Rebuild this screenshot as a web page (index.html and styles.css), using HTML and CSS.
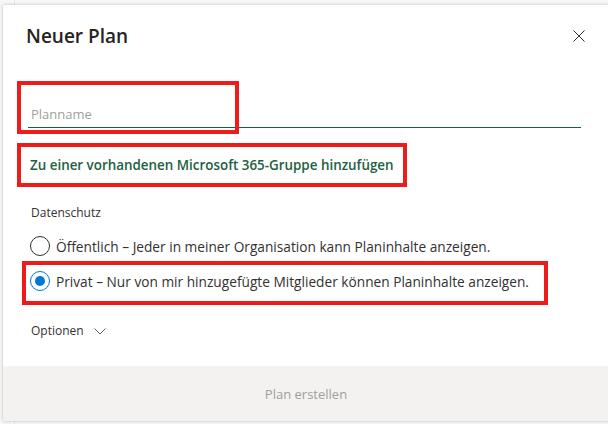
FILE: index.html
```html
<!DOCTYPE html>
<html lang="de">
<head>
    <meta charset="UTF-8">
    <meta name="viewport" content="width=device-width, initial-scale=1.0">
    <title>Neuer Plan</title>
    <link rel="stylesheet" href="styles.css">
</head>
<body>
    <div class="dialog">
        <div class="header">
            <h1>Neuer Plan</h1>
            <button class="close" aria-label="Schließen">
                <svg width="12" height="12" viewBox="0 0 12 12">
                    <path d="M0.5 0.5 L11.5 11.5 M11.5 0.5 L0.5 11.5" stroke="#323130" stroke-width="1" fill="none"/>
                </svg>
            </button>
        </div>

        <div class="content">
            <div class="field">
                <input type="text" placeholder="Planname">
                <div class="mark"></div>
            </div>

            <a href="#" class="groupLink">Zu einer vorhandenen Microsoft 365-Gruppe hinzufügen</a>

            <div class="sectionLabel">Datenschutz</div>

            <label class="radioRow">
                <span class="radio"></span>
                <span>Öffentlich – Jeder in meiner Organisation kann Planinhalte anzeigen.</span>
            </label>
            <label class="radioRow checked marked">
                <span class="radio"></span>
                <span>Privat – Nur von mir hinzugefügte Mitglieder können Planinhalte anzeigen.</span>
            </label>

            <div class="options">
                Optionen
                <svg width="12" height="7" viewBox="0 0 12 7">
                    <path d="M0.5 0.5 L6 6 L11.5 0.5" stroke="#605e5c" stroke-width="1" fill="none"/>
                </svg>
            </div>
        </div>

        <div class="footer">Plan erstellen</div>
    </div>
</body>
</html>
```

FILE: styles.css
```css
html, body {
    margin: 0;
    padding: 0;
}

body {
    width: 608px;
    height: 424px;
    overflow: hidden;
    background: linear-gradient(to right, #f7f7f7 14px, #e6e6e6 14px, #e6e6e6 15px, #f7f7f7 15px);
    font-family: "Open Sans", "Noto Sans", sans-serif;
    color: #323130;
}

.dialog {
    margin: 5px 0 0 3px;
    width: 606px;
    height: 416px;
    background: #fff;
    box-shadow: 0 0 3px rgba(0, 0, 0, 0.25);
    display: flex;
    flex-direction: column;
}

.header {
    display: flex;
    align-items: center;
    justify-content: space-between;
    padding: 17px 24px 0 23px;
}

.header h1 {
    margin: 0;
    font-size: 19px;
    line-height: 28px;
    font-weight: 600;
    color: #252423;
}

.close {
    width: 12px;
    height: 12px;
    padding: 0;
    border: none;
    background: none;
    display: flex;
    cursor: pointer;
}

.content {
    padding: 0 28px 0 25px;
    display: flex;
    flex-direction: column;
    align-items: flex-start;
}

.field {
    position: relative;
    align-self: stretch;
    margin-top: 46px;
}

.field input {
    box-sizing: border-box;
    width: 100%;
    height: 32px;
    padding: 4px 3px 0;
    border: none;
    border-bottom: 1px solid #1f5c3e;
    outline: none;
    font-family: inherit;
    font-size: 13px;
    color: #323130;
}

.field input::placeholder {
    color: #a19f9d;
}

/* annotation frames */
.mark {
    position: absolute;
    left: -11px;
    top: -15px;
    width: 214px;
    height: 45px;
    border: 4px solid #ec1c1c;
    pointer-events: none;
}

.groupLink {
    margin: 15px 0 0 -11px;
    padding: 8px 9px;
    border: 4px solid #ec1c1c;
    font-size: 13.4px;
    line-height: 20px;
    font-weight: 600;
    color: #22603f;
    text-decoration: none;
}

.sectionLabel {
    margin: 18px 0 0 3px;
    font-size: 12px;
    line-height: 16px;
}

.radioRow {
    display: flex;
    align-items: center;
    gap: 6px;
    height: 24px;
    margin: 13px 0 0 2px;
    font-size: 13.7px;
    cursor: pointer;
}

.radio {
    box-sizing: border-box;
    width: 20px;
    height: 20px;
    border: 1px solid #323130;
    border-radius: 50%;
    display: flex;
    align-items: center;
    justify-content: center;
}

.radioRow.checked .radio {
    border-color: #0078d4;
}

.radioRow.checked .radio::after {
    content: "";
    width: 10px;
    height: 10px;
    border-radius: 50%;
    background: #0078d4;
}

.radioRow.marked {
    margin: 3px 0 0 -6px;
    padding: 4px 15px 8px 4px;
    border: 4px solid #ec1c1c;
}

.options {
    display: flex;
    align-items: center;
    gap: 10px;
    margin: 17px 0 0 3px;
    font-size: 12px;
    line-height: 18px;
}

.footer {
    margin-top: auto;
    height: 55px;
    background: #f3f2f1;
    display: flex;
    align-items: center;
    justify-content: center;
    font-size: 13px;
    color: #a19f9d;
}
```
